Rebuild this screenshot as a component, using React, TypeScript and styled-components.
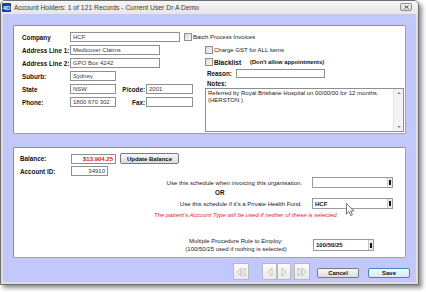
import styled, { createGlobalStyle } from "styled-components";

const lavender = "#c2c8fa";

const GlobalStyle = createGlobalStyle`
  html, body {
    margin: 0;
    padding: 0;
    background: #ffffff;
  }
  body {
    font-family: "Liberation Sans", Arial, sans-serif;
    color: #222;
  }
`;

const Page = styled.div`
  width: 426px;
  height: 292px;
  overflow: hidden;
`;

const Window = styled.div`
  position: relative;
  box-sizing: border-box;
  width: 419px;
  height: 285px;
  border: 1px solid #6d6d6d;
  border-radius: 5px 5px 0 0;
  background: #dcdee4;
  padding: 0 2px 2px;
  box-shadow: 3px 3px 4px rgba(0, 0, 0, 0.45);
  display: flex;
  flex-direction: column;
`;

const TitleBar = styled.div`
  height: 13px;
  margin: 0 -2px;
  padding: 0 6px 0 1px;
  display: flex;
  align-items: center;
  gap: 3px;
  background: linear-gradient(#f6f6f6, #e6e6e6);
  border-radius: 4px 4px 0 0;
`;

const TitleText = styled.span`
  flex: 1;
  font-size: 6.8px;
  color: #3a3a3a;
  white-space: nowrap;
`;

const CloseButton = styled.div`
  box-sizing: border-box;
  width: 12px;
  height: 8px;
  margin-top: -1px;
  border: 1px solid #8a8a8a;
  border-radius: 2px;
  background: linear-gradient(#f7f7f7, #d9d9d9);
  display: flex;
  align-items: center;
  justify-content: center;
`;

const Client = styled.div`
  flex: 1;
  background: ${lavender};
  padding: 11px 0 0 10px;
  display: flex;
  flex-direction: column;
`;

const Panel = styled.div`
  box-sizing: border-box;
  width: 393px;
  background: #ffffff;
  border: 1px solid #a3a3a3;
  border-top-color: #8f8f8f;
  border-left-color: #8f8f8f;
  border-radius: 2px;
`;

const TopPanel = styled(Panel)`
  height: 109px;
  padding: 6px 0 0 8px;
`;

const BottomPanel = styled(Panel)`
  height: 111px;
  margin-top: 13px;
  padding: 5px 0 0 6px;
`;

const Row = styled.div<{ $h?: number; $mt?: number }>`
  display: flex;
  align-items: center;
  height: ${(p) => p.$h ?? 10}px;
  margin-top: ${(p) => p.$mt ?? 0}px;
`;

const Label = styled.span<{ $w?: number; $right?: boolean; $size?: number }>`
  flex-shrink: 0;
  width: ${(p) => (p.$w ? `${p.$w}px` : "auto")};
  font-size: ${(p) => p.$size ?? 6.3}px;
  font-weight: bold;
  color: #111;
  white-space: nowrap;
  text-align: ${(p) => (p.$right ? "right" : "left")};
  box-sizing: border-box;
  padding-right: ${(p) => (p.$right ? 1 : 0)}px;
`;

const Text = styled.span<{ $ml?: number }>`
  font-size: 6px;
  color: #222;
  white-space: nowrap;
  margin-left: ${(p) => p.$ml ?? 0}px;
`;

const TextBox = styled.div<{ $w: number; $right?: boolean; $red?: boolean; $h?: number }>`
  box-sizing: border-box;
  flex-shrink: 0;
  width: ${(p) => p.$w}px;
  height: ${(p) => p.$h ?? 10}px;
  border: 1px solid #8e8f8f;
  background: #ffffff;
  padding: 0 2px;
  display: flex;
  align-items: center;
  justify-content: ${(p) => (p.$right ? "flex-end" : "flex-start")};
  font-size: 6px;
  font-weight: ${(p) => (p.$red ? "bold" : "normal")};
  color: ${(p) => (p.$red ? "#e8141c" : "#3a3a3a")};
  white-space: nowrap;
  overflow: hidden;
`;

const CheckBox = styled.span<{ $ml?: number }>`
  box-sizing: border-box;
  flex-shrink: 0;
  width: 8px;
  height: 8px;
  margin-left: ${(p) => p.$ml ?? 0}px;
  margin-right: 1px;
  border: 1px solid #8f8f8f;
  background: linear-gradient(135deg, #dcdcdc, #f7f7f7);
`;

const Columns = styled.div`
  display: flex;
  margin-top: 3px;
`;

const LeftCol = styled.div`
  width: 183px;
  display: flex;
  flex-direction: column;
  gap: 3px;
`;

const RightCol = styled.div`
  width: 199px;
  display: flex;
  flex-direction: column;
  gap: 1px;
`;

const NotesBox = styled.div`
  box-sizing: border-box;
  height: 44px;
  border: 1px solid #8e8f8f;
  display: flex;
`;

const NotesText = styled.div`
  flex: 1;
  padding: 1px 2px;
  font-size: 6px;
  line-height: 7px;
  color: #222;
`;

const ScrollBar = styled.div`
  width: 9px;
  background: #f3f3f3;
  border-left: 1px solid #e0e0e0;
  display: flex;
  flex-direction: column;
  justify-content: space-between;
  align-items: center;
  padding: 3px 0;
`;

const Arrow = styled.span<{ $up?: boolean }>`
  width: 0;
  height: 0;
  border-left: 2px solid transparent;
  border-right: 2px solid transparent;
  ${(p) => (p.$up ? "border-bottom: 2px solid #8a8a8a;" : "border-top: 2px solid #8a8a8a;")}
`;

const GrayButton = styled.div<{ $w: number; $h: number; $primary?: boolean }>`
  box-sizing: border-box;
  flex-shrink: 0;
  width: ${(p) => p.$w}px;
  height: ${(p) => p.$h}px;
  border: 1px solid ${(p) => (p.$primary ? "#3c86c4" : "#7a7a7a")};
  border-radius: 2px;
  background: ${(p) =>
    p.$primary ? "linear-gradient(#f2f8fd, #dbe9f5)" : "linear-gradient(#f7f7f7, #dddddd)"};
  display: flex;
  align-items: center;
  justify-content: center;
  font-size: 6px;
  font-weight: bold;
  color: #111;
  white-space: nowrap;
`;

const ScheduleText = styled.span`
  width: 282px;
  flex-shrink: 0;
  text-align: right;
  font-size: 6px;
  color: #222;
  white-space: nowrap;
`;

const Dropdown = styled.div<{ $w: number; $h?: number; $ml?: number }>`
  box-sizing: border-box;
  position: relative;
  flex-shrink: 0;
  width: ${(p) => p.$w}px;
  height: ${(p) => p.$h ?? 11}px;
  margin-left: ${(p) => p.$ml ?? 10}px;
  border: 1px solid #9a9a9a;
  background: #ffffff;
  display: flex;
  align-items: center;
  padding-left: 2px;
  font-size: 6px;
  font-weight: bold;
  color: #111;
`;

const DropButton = styled.span`
  position: absolute;
  right: 0;
  top: 0;
  bottom: 0;
  width: 4px;
  border-left: 1px solid #c8c8c8;
  background: #ececec;
  display: flex;
  align-items: center;
  justify-content: center;
  &::after {
    content: "";
    width: 2px;
    height: 5px;
    background: #111;
  }
`;

const OrText = styled.div`
  height: 8px;
  margin-top: 1px;
  padding-left: 195px;
  font-size: 6.3px;
  font-weight: bold;
  line-height: 8px;
  color: #111;
`;

const Warning = styled.div`
  height: 8px;
  margin-top: 2px;
  padding-left: 134px;
  font-size: 6px;
  font-style: italic;
  line-height: 8px;
  color: #e8202a;
  white-space: nowrap;
`;

const MultiText = styled.div`
  width: 132px;
  margin-left: 150px;
  flex-shrink: 0;
  font-size: 6px;
  line-height: 8px;
  text-align: center;
  color: #222;
  white-space: nowrap;
`;

const ButtonRow = styled.div`
  flex: 1;
  display: flex;
  justify-content: flex-end;
  align-items: flex-start;
  padding-right: 6px;
`;

const NavButton = styled.div<{ $ml?: number; $w?: number }>`
  box-sizing: border-box;
  width: ${(p) => p.$w ?? 16}px;
  height: 17px;
  margin-top: 5px;
  margin-left: ${(p) => p.$ml ?? 0}px;
  border: 1px solid #b9b9b9;
  background: linear-gradient(#fbfbfb, #e9e9e9);
  display: flex;
  align-items: center;
  justify-content: center;
`;

const ActionButton = styled(GrayButton)<{ $ml: number }>`
  margin-top: 10px;
  margin-left: ${(p) => p.$ml}px;
`;

const Cursor = styled.svg`
  position: absolute;
  left: 345px;
  top: 202px;
`;

const tri = (dir: "l" | "r", x: number) =>
  dir === "l" ? `${x + 4},1 ${x},5 ${x + 4},9` : `${x},1 ${x + 4},5 ${x},9`;

const NavIcon = ({ dir, double }: { dir: "l" | "r"; double?: boolean }) => (
  <svg width={double ? 10 : 6} height="10" viewBox={`0 0 ${double ? 10 : 6} 10`}>
    <polygon points={tri(dir, 1)} fill="#f4f4f4" stroke="#b3b3b3" strokeWidth="0.8" />
    {double && <polygon points={tri(dir, 5)} fill="#f4f4f4" stroke="#b3b3b3" strokeWidth="0.8" />}
  </svg>
);

export default function App() {
  return (
    <Page>
      <GlobalStyle />
      <Window>
        <TitleBar>
          <svg width="9" height="9" viewBox="0 0 9 9">
            <rect width="9" height="9" rx="1" fill="#1d3f9e" />
            <text x="4.5" y="7" fontSize="6" fontWeight="bold" fill="#fff" textAnchor="middle" fontFamily="Liberation Sans, sans-serif">
              4D
            </text>
          </svg>
          <TitleText>Account Holders: 1 of 121 Records - Current User Dr A Demo</TitleText>
          <CloseButton>
            <svg width="5" height="4" viewBox="0 0 5 4">
              <path d="M0.5 0.5 L4.5 3.5 M4.5 0.5 L0.5 3.5" stroke="#555" strokeWidth="1" />
            </svg>
          </CloseButton>
        </TitleBar>

        <Client>
          <TopPanel>
            <Row>
              <Label $w={48}>Company</Label>
              <TextBox $w={110}>HCF</TextBox>
              <CheckBox $ml={4} />
              <Text>Batch Process Invoices</Text>
            </Row>
            <Columns>
              <LeftCol>
                <Row>
                  <Label $w={48}>Address Line 1:</Label>
                  <TextBox $w={90}>Medicover Claims</TextBox>
                </Row>
                <Row>
                  <Label $w={48}>Address Line 2:</Label>
                  <TextBox $w={90}>GPO Box 4242</TextBox>
                </Row>
                <Row>
                  <Label $w={48}>Suburb:</Label>
                  <TextBox $w={46}>Sydney</TextBox>
                </Row>
                <Row>
                  <Label $w={48}>State</Label>
                  <TextBox $w={46}>NSW</TextBox>
                  <Label $w={30} $right>P/code:</Label>
                  <TextBox $w={47}>2001</TextBox>
                </Row>
                <Row>
                  <Label $w={48}>Phone:</Label>
                  <TextBox $w={46}>1800 670 302</TextBox>
                  <Label $w={30} $right>Fax:</Label>
                  <TextBox $w={47} />
                </Row>
              </LeftCol>
              <RightCol>
                <Row>
                  <CheckBox />
                  <Text>Charge GST for ALL items</Text>
                </Row>
                <Row $mt={1}>
                  <CheckBox />
                  <Label $size={6.6} $w={36}>Blacklist</Label>
                  <Label $size={5.8}>(Don't allow appointments)</Label>
                </Row>
                <Row>
                  <Label $w={31} style={{ paddingLeft: 2 }}>Reason:</Label>
                  <TextBox $w={89} $h={9} />
                </Row>
                <Row $h={8}>
                  <Label style={{ paddingLeft: 2 }}>Notes:</Label>
                </Row>
                <NotesBox>
                  <NotesText>
                    Referred by Royal Brisbane Hospital on 00/00/00 for 12 months.
                    <br />
                    (HERSTON )
                  </NotesText>
                  <ScrollBar>
                    <Arrow $up />
                    <Arrow />
                  </ScrollBar>
                </NotesBox>
              </RightCol>
            </Columns>
          </TopPanel>

          <BottomPanel>
            <Row $h={11}>
              <Label $w={51}>Balance:</Label>
              <TextBox $w={45} $right $red>$13,904.25</TextBox>
              <GrayButton $w={59} $h={11} style={{ marginLeft: 4 }}>Update Balance</GrayButton>
            </Row>
            <Row $mt={2}>
              <Label $w={51}>Account ID:</Label>
              <TextBox $w={37} $right>34910</TextBox>
            </Row>
            <Row $h={11} $mt={1}>
              <ScheduleText>Use this schedule when invoicing this organisation.</ScheduleText>
              <Dropdown $w={81}>
                <DropButton />
              </Dropdown>
            </Row>
            <OrText>OR</OrText>
            <Row $h={11} $mt={1}>
              <ScheduleText>Use this schedule if it's a Private Health Fund.</ScheduleText>
              <Dropdown $w={81}>
                HCF
                <DropButton />
              </Dropdown>
            </Row>
            <Warning>The patient's Account Type will be used if neither of these is selected.</Warning>
            <Row $h={16} $mt={18}>
              <MultiText>
                Multiple Procedure Rule to Employ:
                <br />
                (100/50/25 used if nothing is selected)
              </MultiText>
              <Dropdown $w={61} $h={12} $ml={11}>
                100/50/25
                <DropButton />
              </Dropdown>
            </Row>
          </BottomPanel>

          <ButtonRow>
            <NavButton>
              <NavIcon dir="l" double />
            </NavButton>
            <NavButton $ml={13} $w={15}>
              <NavIcon dir="l" />
            </NavButton>
            <NavButton $w={14}>
              <NavIcon dir="r" />
            </NavButton>
            <NavButton $ml={3}>
              <NavIcon dir="r" double />
            </NavButton>
            <ActionButton $w={42} $h={10} $ml={7}>Cancel</ActionButton>
            <ActionButton $w={42} $h={10} $ml={9} $primary>Save</ActionButton>
          </ButtonRow>
        </Client>

        <Cursor width="9" height="14" viewBox="0 0 9 14">
          <path d="M0.5 0.5 L0.5 11 L3 8.6 L4.8 12.6 L6.4 11.9 L4.7 8 L8 8 Z" fill="#fff" stroke="#555" strokeWidth="0.8" />
        </Cursor>
      </Window>
    </Page>
  );
}
